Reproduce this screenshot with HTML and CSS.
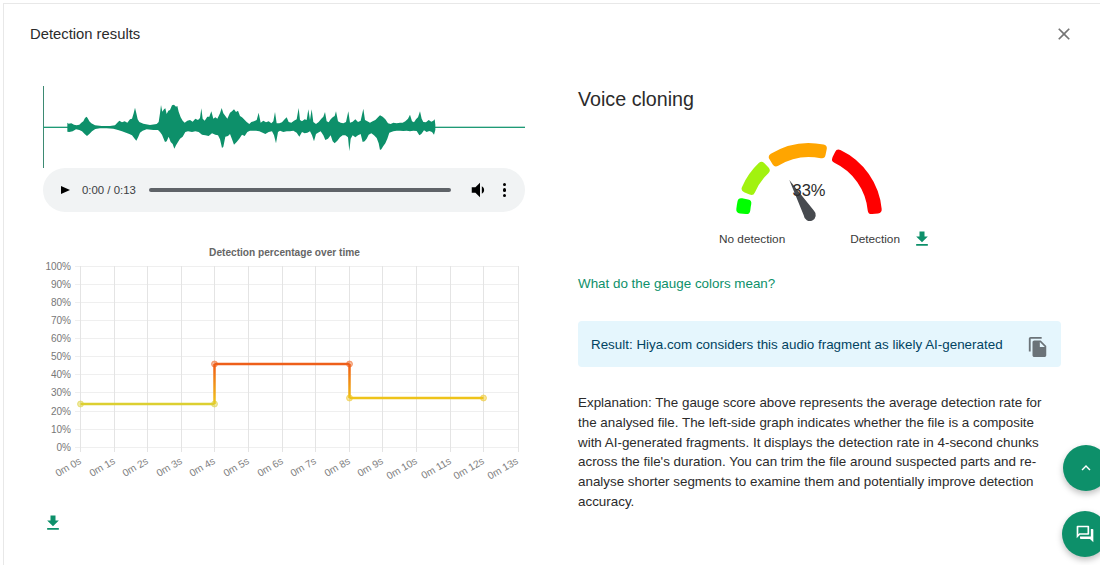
FILE: index.html
```html
<!DOCTYPE html>
<html lang="en">
<head>
    <meta charset="UTF-8">
    <meta name="viewport" content="width=device-width, initial-scale=1.0">
    <title>Detection results</title>
    <link rel="stylesheet" href="styles.css">
</head>

<body>
    <div class="dialog">
        <header class="dialog-header">
            <h1>Detection results</h1>
            <svg class="close-icon" viewBox="0 0 24 24"><path d="M19 6.41 17.59 5 12 10.59 6.41 5 5 6.41 10.59 12 5 17.59 6.41 19 12 13.41 17.59 19 19 17.59 13.41 12z"/></svg>
        </header>

        <div class="dialog-body">
            <!-- Left column: waveform, player, chart -->
            <div class="left-col">
                <svg class="waveform" viewBox="39 15 1446 249">
                    <rect x="39" y="18" width="3" height="246" fill="#3d8a73"/>
                    <rect x="39" y="140" width="1446" height="4" fill="#1f9a76"/>
                    <path fill="#0d906a" d="M112 128L116 131L124 130L132 134L140 136L148 134L154 128L160 124L165 114L170 110L174 116L178 124L184 130L195 136L215 138L240 138L255 136L262 128L268 122L276 127L284 124L292 128L300 118L306 116L311 100L315 83L319 100L323 118L328 126L340 131L360 135L380 132L386 126L390 100L393 75L397 95L402 88L406 85L410 102L415 92L420 90L426 76L432 74L438 80L442 78L446 95L452 112L458 122L464 128L472 122L480 120L488 125L496 116L504 120L510 114L514 85L518 116L524 122L532 110L538 110L544 94L550 116L556 112L562 116L570 100L575 84L580 100L586 108L592 116L600 98L606 94L612 88L618 96L624 92L630 108L636 112L642 118L650 126L658 132L664 126L672 124L680 120L686 98L692 128L700 122L708 127L716 124L724 130L730 124L735 96L740 130L748 130L756 127L764 118L770 112L776 126L784 128L792 122L800 118L806 84L810 120L816 124L824 118L830 120L835 88L840 120L845 88L850 126L858 132L866 126L874 116L880 110L885 96L890 124L896 127L902 118L908 112L914 108L918 94L924 124L932 128L940 130L948 126L955 94L960 128L968 125L976 118L984 126L992 122L1000 86L1005 120L1012 124L1020 128L1028 124L1036 120L1044 112L1050 106L1058 110L1066 118L1074 130L1082 132L1090 128L1100 130L1110 128L1118 128L1126 124L1134 116L1140 104L1146 124L1152 127L1158 118L1164 112L1170 94L1175 116L1180 126L1188 127L1196 120L1204 125L1210 122L1214 118L1216 134L1216 150L1212 164L1206 156L1198 153L1190 156L1182 151L1174 162L1168 166L1160 153L1150 152L1140 154L1130 152L1120 153L1110 152L1100 152L1090 154L1078 158L1072 176L1066 190L1060 198L1054 208L1050 210L1046 190L1040 174L1032 166L1024 160L1016 164L1010 176L1004 184L998 186L992 162L984 166L976 172L968 166L962 176L958 214L954 172L946 166L938 166L930 172L922 182L914 190L908 184L902 166L894 176L886 180L880 166L872 154L864 158L858 162L852 184L846 166L840 154L832 158L824 160L816 156L808 170L800 158L790 152L780 154L770 154L760 156L750 152L744 156L738 190L732 166L726 154L716 156L706 162L698 158L688 154L678 152L668 152L660 152L652 156L644 168L636 164L628 176L620 186L612 194L606 178L600 162L594 168L586 170L580 200L576 204L570 178L564 166L556 164L546 160L536 168L526 166L516 164L506 156L496 154L486 156L474 154L466 156L458 170L450 176L444 186L438 196L433 206L428 192L422 186L416 170L410 184L405 186L400 174L396 164L390 156L384 150L370 150L350 148L338 152L330 158L325 170L319 182L314 176L306 166L298 162L288 158L276 154L264 150L250 146L230 145L210 145L196 147L186 154L178 162L171 168L164 162L156 154L148 150L138 148L128 154L118 156L112 155Z"/>
                </svg>

                <div class="player">
                    <span class="play-btn"></span>
                    <span class="player-time">0:00 / 0:13</span>
                    <span class="player-track"></span>
                    <svg class="volume-icon" viewBox="0 0 24 24"><path d="M3 9v6h4l5 5V4L7 9H3zm13.5 3c0-1.77-1.02-3.29-2.5-4.03v8.05c1.48-.73 2.5-2.25 2.5-4.02z"/></svg>
                    <span class="player-dots"><i></i><i></i><i></i></span>
                </div>

                <svg class="chart" viewBox="43 240 482 260">
                    <text class="chart-title" x="284.5" y="256">Detection percentage over time</text>

                    <path class="grid-h" d="M75 266.5H518.5M75 284.5H518.5M75 302.5H518.5M75 320.5H518.5M75 338.5H518.5M75 356.5H518.5M75 374.5H518.5M75 392.5H518.5M75 411.5H518.5M75 429.5H518.5M75 447.5H518.5"/>
                    <path class="grid-v" d="M80.5 266V452M114.5 266V452M147.5 266V452M181.5 266V452M214.5 266V452M248.5 266V452M282.5 266V452M315.5 266V452M349.5 266V452M382.5 266V452M416.5 266V452M450.5 266V452M483.5 266V452M518.5 266V452"/>

                    <g class="y-labels">
                        <text x="71" y="270">100%</text>
                        <text x="71" y="288">90%</text>
                        <text x="71" y="306">80%</text>
                        <text x="71" y="324">70%</text>
                        <text x="71" y="342">60%</text>
                        <text x="71" y="360">50%</text>
                        <text x="71" y="378">40%</text>
                        <text x="71" y="396">30%</text>
                        <text x="71" y="415">20%</text>
                        <text x="71" y="433">10%</text>
                        <text x="71" y="451">0%</text>
                    </g>

                    <g class="x-labels">
                        <text transform="translate(82 463) rotate(-30)">0m 0s</text>
                        <text transform="translate(116 463) rotate(-30)">0m 1s</text>
                        <text transform="translate(149 463) rotate(-30)">0m 2s</text>
                        <text transform="translate(183 463) rotate(-30)">0m 3s</text>
                        <text transform="translate(216 463) rotate(-30)">0m 4s</text>
                        <text transform="translate(250 463) rotate(-30)">0m 5s</text>
                        <text transform="translate(284 463) rotate(-30)">0m 6s</text>
                        <text transform="translate(317 463) rotate(-30)">0m 7s</text>
                        <text transform="translate(351 463) rotate(-30)">0m 8s</text>
                        <text transform="translate(384 463) rotate(-30)">0m 9s</text>
                        <text transform="translate(418 463) rotate(-30)">0m 10s</text>
                        <text transform="translate(452 463) rotate(-30)">0m 11s</text>
                        <text transform="translate(485 463) rotate(-30)">0m 12s</text>
                        <text transform="translate(519 463) rotate(-30)">0m 13s</text>
                    </g>

                    <defs>
                        <linearGradient id="stepUp" gradientUnits="userSpaceOnUse" x1="0" y1="404" x2="0" y2="364">
                            <stop offset="0" stop-color="#f0c81e"/>
                            <stop offset="1" stop-color="#f05a14"/>
                        </linearGradient>
                        <linearGradient id="stepDown" gradientUnits="userSpaceOnUse" x1="0" y1="364" x2="0" y2="398">
                            <stop offset="0" stop-color="#f05a14"/>
                            <stop offset="1" stop-color="#f0bc14"/>
                        </linearGradient>
                    </defs>
                    <path class="line" stroke="#dccf30" d="M80.5 404H214.5"/>
                    <path class="line" stroke="url(#stepUp)" d="M214.5 404V364"/>
                    <path class="line" stroke="#ee5f1a" d="M214.5 364H349.5"/>
                    <path class="line" stroke="url(#stepDown)" d="M349.5 364V398"/>
                    <path class="line" stroke="#eec31a" d="M349.5 398H483.5"/>
                    <circle class="point" cx="80.5" cy="404" r="3" fill="#dccf30" stroke="#dccf30"/>
                    <circle class="point" cx="214.5" cy="404" r="3" fill="#dccf30" stroke="#dccf30"/>
                    <circle class="point" cx="214.5" cy="364" r="3" fill="#ee5f1a" stroke="#ee5f1a"/>
                    <circle class="point" cx="349.5" cy="364" r="3" fill="#ee5f1a" stroke="#ee5f1a"/>
                    <circle class="point" cx="349.5" cy="398" r="3" fill="#eec31a" stroke="#eec31a"/>
                    <circle class="point" cx="483.5" cy="398" r="3" fill="#eec31a" stroke="#eec31a"/>
                </svg>

                <svg class="download-icon chart-download" viewBox="0 0 24 24"><path d="M5 20h14v-2H5v2zM19 9h-4V3H9v6H5l7 7 7-7z"/></svg>
            </div>

            <!-- Right column: gauge and result -->
            <div class="right-col">
                <h2>Voice cloning</h2>

                <svg class="gauge" viewBox="-74 -74 148 84">
                    <g class="gauge-arcs">
                        <path fill="#00ff00" stroke="#00ff00" d="M-68.7 -6.6A69 69 0 0 1 -67.6 -13.8L-61.7 -12.6A63 63 0 0 0 -62.7 -6Z"/>
                        <path fill="#a2f20f" stroke="#a2f20f" d="M-63.3 -27.5A69 69 0 0 1 -47.5 -50.1L-43.4 -45.7A63 63 0 0 0 -57.8 -25.1Z"/>
                        <path fill="#ffa500" stroke="#ffa500" d="M-36.1 -58.8A69 69 0 0 1 13.8 -67.6L12.6 -61.7A63 63 0 0 0 -32.9 -53.7Z"/>
                        <path fill="#ff0000" stroke="#ff0000" d="M29.7 -62.3A69 69 0 0 1 68.7 -6.6L62.7 -6A63 63 0 0 0 27.1 -56.9Z"/>
                    </g>
                    <path class="needle" d="M-19.7 -36L5 -5.2A6 6 0 1 1 -5.2 -0.4Z"/>
                    <text class="gauge-value" x="0" y="-20">33%</text>
                </svg>

                <div class="gauge-legend">
                    <span>No detection</span>
                    <span class="legend-right">
                        Detection
                        <svg class="download-icon" viewBox="0 0 24 24"><path d="M5 20h14v-2H5v2zM19 9h-4V3H9v6H5l7 7 7-7z"/></svg>
                    </span>
                </div>

                <a class="gauge-link" href="#colors">What do the gauge colors mean?</a>

                <div class="result-alert">
                    <span>Result: Hiya.com considers this audio fragment as likely AI-generated</span>
                    <svg class="copy-icon" viewBox="0 0 24 24"><path d="M16 1H4c-1.1 0-2 .9-2 2v14h2V3h12V1zm-1 4 6 6v10c0 1.1-.9 2-2 2H7.99C6.89 23 6 22.1 6 21l.01-14c0-1.1.89-2 1.99-2h7zm-1 7h5.5L14 6.5V12z"/></svg>
                </div>

                <p class="explanation">Explanation: The gauge score above represents the average detection rate for the analysed file. The left-side graph indicates whether the file is a composite with AI-generated fragments. It displays the detection rate in 4-second chunks across the file's duration. You can trim the file around suspected parts and re-analyse shorter segments to examine them and potentially improve detection accuracy.</p>
            </div>
        </div>
    </div>

    <!-- Botões flutuantes -->
    <button class="fab fab-top"><svg viewBox="0 0 24 24"><path d="M12 8l-6 6 1.41 1.41L12 10.83l4.59 4.58L18 14z"/></svg></button>
    <button class="fab fab-chat"><svg viewBox="0 0 24 24"><path d="M15 4v7H5.17L4 12.17V4h11m1-2H3c-.55 0-1 .45-1 1v14l4-4h10c.55 0 1-.45 1-1V3c0-.55-.45-1-1-1zm5 4h-2v9H6v2c0 .55.45 1 1 1h11l4 4V7c0-.55-.45-1-1-1z"/></svg></button>
</body>
</html>
```

FILE: styles.css
```css
* {
    margin: 0;
    padding: 0;
    box-sizing: border-box;
}

body {
    font-family: "Liberation Sans", Arial, sans-serif;
    background-color: #ffffff;
    color: #2b2b2b;
    height: 100vh;
    overflow: hidden;
}

/* Dialog */
.dialog {
    margin: 3px 0 0 3px;
    height: 100%;
    border-top: 1px solid #e8e8e8;
    border-left: 1px solid #e8e8e8;
}

.dialog-header {
    display: flex;
    justify-content: space-between;
    align-items: center;
    height: 59px;
    padding: 0 26px;
}

.dialog-header h1 {
    font-size: 14.8px;
    font-weight: 400;
}

.close-icon {
    width: 20px;
    height: 20px;
    fill: #757575;
}

.dialog-body {
    display: flex;
    gap: 53px;
    padding: 22px 0 0 39px;
}

/* Left column */
.left-col {
    width: 482px;
    flex-shrink: 0;
}

.waveform {
    display: block;
    width: 482px;
    height: 83px;
}

.player {
    display: flex;
    align-items: center;
    height: 44px;
    padding: 0 18px;
    background-color: #f1f3f4;
    border-radius: 22px;
    color: #3c4043;
}

.play-btn {
    width: 0;
    height: 0;
    border-left: 9px solid #000;
    border-top: 4.5px solid transparent;
    border-bottom: 4.5px solid transparent;
}

.player-time {
    font-size: 11.4px;
    margin-left: 12px;
}

.player-track {
    flex: 1;
    height: 4px;
    margin: 0 18px 0 13px;
    background-color: #5f6368;
    border-radius: 2px;
}

.volume-icon {
    width: 22px;
    height: 22px;
    fill: #000;
    flex-shrink: 0;
    margin-right: 12px;
}

.player-dots {
    display: flex;
    flex-direction: column;
    gap: 2px;
    margin-right: 1px;
}

.player-dots i {
    display: block;
    width: 3.4px;
    height: 3.4px;
    border-radius: 50%;
    background-color: #000;
}

/* Chart */
.chart {
    display: block;
    width: 482px;
    height: 260px;
    margin-top: 28px;
    font-family: "Liberation Sans", Arial, sans-serif;
}

.chart-title {
    font-size: 10.15px;
    font-weight: 700;
    fill: #666;
    text-anchor: middle;
}

.grid-h {
    fill: none;
    stroke: #efefef;
    stroke-width: 1;
}

.grid-v {
    fill: none;
    stroke: #e4e4e4;
    stroke-width: 1;
}

.y-labels text {
    font-size: 10px;
    fill: #777;
    text-anchor: end;
}

.x-labels text {
    font-size: 10.2px;
    fill: #808080;
    text-anchor: end;
}

.line {
    fill: none;
    stroke-width: 2.5;
}

.point {
    fill-opacity: 0.45;
    stroke-opacity: 0.5;
    stroke-width: 1;
}

.download-icon {
    width: 20px;
    height: 20px;
    fill: #0d906a;
    display: block;
}

.chart-download {
    margin: 13px 0 0 0;
}

/* Right column */
.right-col {
    width: 483px;
    flex-shrink: 0;
}

.right-col h2 {
    margin-top: 3px;
    font-size: 19.7px;
    font-weight: 400;
    line-height: 23px;
}

.gauge {
    display: block;
    width: 148px;
    height: 84px;
    margin: 31px 0 0 157px;
    font-family: "Liberation Sans", Arial, sans-serif;
}

.gauge-arcs path {
    stroke-width: 8;
    stroke-linejoin: round;
}

.needle {
    fill: #474a4f;
}

.gauge-value {
    font-size: 16.5px;
    fill: #2b2b2b;
    text-anchor: middle;
}

.gauge-legend {
    display: flex;
    justify-content: space-between;
    align-items: center;
    width: 213px;
    height: 20px;
    margin: 3px 0 0 141px;
    font-size: 11.8px;
    color: #3a3a3a;
}

.legend-right {
    display: flex;
    align-items: center;
    gap: 12px;
}

.gauge-link {
    display: block;
    margin-top: 25px;
    font-size: 13.4px;
    line-height: 20px;
    color: #0d906a;
    text-decoration: none;
}

.result-alert {
    display: flex;
    justify-content: space-between;
    align-items: center;
    height: 46px;
    margin-top: 27px;
    padding: 0 12px 0 13px;
    font-size: 13.4px;
    color: #014361;
    background-color: #e5f6fd;
    border-radius: 4px;
}

.copy-icon {
    width: 22px;
    height: 22px;
    fill: #6b7378;
    margin-top: 6px;
}

.explanation {
    margin-top: 26px;
    font-size: 13.4px;
    line-height: 19.8px;
}

/* Floating buttons */
.fab {
    position: fixed;
    width: 46px;
    height: 46px;
    display: flex;
    align-items: center;
    justify-content: center;
    border: none;
    border-radius: 50%;
    background-color: #0d906a;
    box-shadow: 0 3px 6px rgba(0, 0, 0, 0.25);
}

.fab svg {
    fill: #ffffff;
}

.fab-top {
    right: -9px;
    top: 445px;
}

.fab-top svg {
    width: 18px;
    height: 18px;
}

.fab-chat {
    right: -8px;
    top: 511px;
}

.fab-chat svg {
    width: 20px;
    height: 20px;
}
```
